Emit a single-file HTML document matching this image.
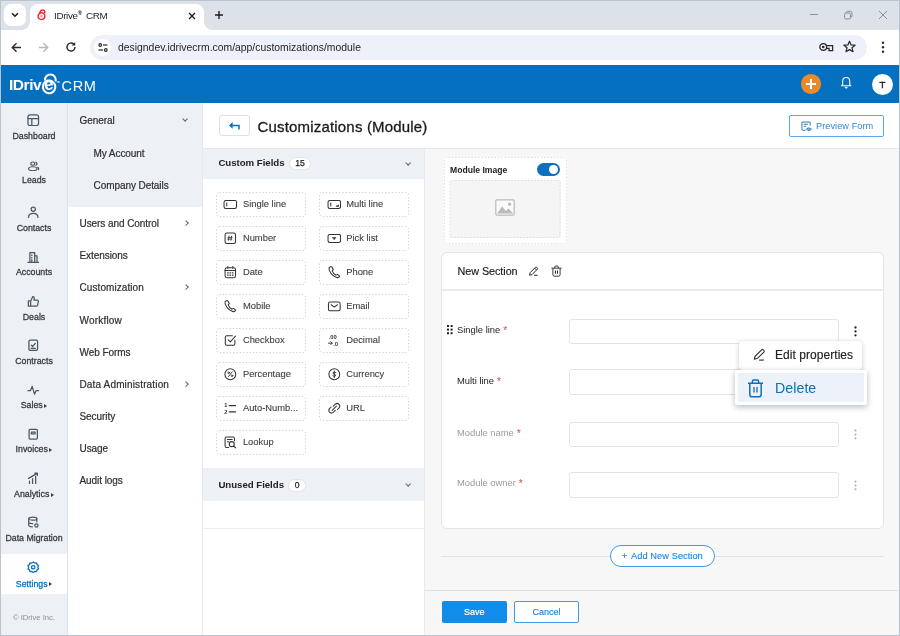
<!DOCTYPE html>
<html lang="en">
<head>
<meta charset="utf-8">
<title>IDrive® CRM</title>
<style>
*{box-sizing:border-box;margin:0;padding:0}
html,body{width:900px;height:636px;overflow:hidden;background:#fff}
body{font-family:"Liberation Sans",sans-serif;color:#333;position:relative;font-size:10px;-webkit-font-smoothing:antialiased;will-change:transform}
.abs{position:absolute}
#frame{position:absolute;left:0;top:0;width:900px;height:636px;border:1px solid #b8c5cf;z-index:100;pointer-events:none}
/* ---------- browser chrome ---------- */
#tabstrip{position:absolute;left:0;top:0;width:900px;height:30px;background:#dde2ea}
#tabsearch{position:absolute;left:4px;top:4px;width:22px;height:22px;border-radius:7px;background:#fff}
#tab{position:absolute;left:30px;top:4px;width:174px;height:26px;background:#fff;border-radius:8px 8px 0 0}
#tab:before,#tab:after{content:"";position:absolute;bottom:0;width:8px;height:8px;background:radial-gradient(circle at 0 0,rgba(255,255,255,0) 7.5px,#fff 8px)}
#tab:before{left:-8px}
#tab:after{right:-8px;background:radial-gradient(circle at 100% 0,rgba(255,255,255,0) 7.5px,#fff 8px)}
#tabtitle{position:absolute;left:24px;top:5.7px;font-size:9.9px;color:#1f1f1f;white-space:nowrap;letter-spacing:-.35px}
#tabtitle sup{font-size:6px;vertical-align:3.5px;letter-spacing:0;font-weight:bold;margin-right:1.5px}
#toolbar{position:absolute;left:1px;top:30px;width:898px;height:35px;background:#fff;border-radius:6px 6px 0 0}
#omni{position:absolute;left:89px;top:4.6px;width:777px;height:25.4px;border-radius:13px;background:#edf1fa}
#omni .site{position:absolute;left:4px;top:4px;width:17px;height:17px;border-radius:50%;background:#fff}
#url{position:absolute;left:28px;top:7.8px;font-size:10.4px;color:#1f1f1f;white-space:nowrap;letter-spacing:0}
/* ---------- app header ---------- */
#hdr{position:absolute;left:1px;top:65px;width:898px;height:38.3px;background:#0570bf}
#logo1{position:absolute;left:8px;top:10.8px;font-size:15.5px;font-weight:bold;color:#fff;letter-spacing:-.45px;white-space:nowrap}
#logoe{position:absolute;left:43.4px;top:11.3px;font-size:17px;font-weight:bold;color:#fff;line-height:18px;transform:rotate(-8deg)}
#logo2{position:absolute;left:60.5px;top:12.6px;font-size:14.5px;color:#fff;white-space:nowrap;letter-spacing:.7px;font-weight:normal}
#plus{position:absolute;left:800.4px;top:9.3px;width:19.6px;height:19.6px;border-radius:50%;background:#e88b2c}
#avatar{position:absolute;left:871px;top:9px;width:21px;height:21px;border-radius:50%;background:#fff;color:#222;font-weight:normal;-webkit-text-stroke:.4px #222;font-size:9.6px;text-align:center;line-height:21.4px}
/* ---------- sidebar 1 ---------- */
#sb1{position:absolute;left:1px;top:103px;width:66px;height:532px;background:#edf1f5}
#sb1line{position:absolute;left:67px;top:103px;width:1px;height:532px;background:#d9e0e7}
.nav{position:absolute;left:0;width:66px;text-align:center;font-size:8.8px;color:#383b3e;white-space:nowrap;letter-spacing:0;-webkit-text-stroke:.28px #383b3e;margin-top:-.2px}
.nav svg{position:absolute;left:26.3px;top:-17.6px;width:12.5px;height:12.5px;stroke:#4a5862;fill:none;stroke-width:1.3;stroke-linecap:round;stroke-linejoin:round}
.nav .car{display:inline-block;width:0;height:0;border-left:3.4px solid #3a3f44;border-top:2.8px solid transparent;border-bottom:2.8px solid transparent;margin-left:1.6px;vertical-align:.2px}
#active{position:absolute;left:0;top:450.6px;width:66px;height:40px;background:#fff}
.nav.on{color:#0b70bf;-webkit-text-stroke-color:#0b70bf}
.nav.on svg{stroke:#0b70bf}
.nav.on .car{border-left-color:#3a3f44}
#copy{position:absolute;left:0;top:510.2px;width:66px;text-align:center;font-size:7.6px;color:#8a9096}
/* ---------- sidebar 2 ---------- */
#sb2{position:absolute;left:68px;top:103px;width:134px;height:532px;background:#fff}
#sb2grp{position:absolute;left:0;top:0;width:134px;height:104px;background:#edf1f5}
#sb2line{position:absolute;left:202px;top:103px;width:1px;height:532px;background:#e4e9ee}
.mi{position:absolute;left:11.5px;font-size:10px;color:#2e2e2e;white-space:nowrap;letter-spacing:-.07px;line-height:12px;margin-top:.7px;-webkit-text-stroke:.2px #2e2e2e}
.mi.sub{left:25.5px}
.chev{position:absolute;width:4.2px;height:4.2px;border-right:1.1px solid #666;border-bottom:1.1px solid #666}
.chev.r{transform:rotate(-45deg)}
.chev.d{transform:rotate(45deg)}

/* ---------- main ---------- */
#main{position:absolute;left:204px;top:103px;width:695px;height:532px;background:#fff}
#phead{position:absolute;left:0;top:0;width:695px;height:44px;background:#fff}
#pline{position:absolute;left:-.5px;top:44.8px;width:695.5px;height:1px;background:#e4e8ed;z-index:3}
#backbtn{position:absolute;left:15px;top:12px;width:31px;height:21px;border:1px solid #dce2e8;border-radius:3px;background:#fff}
#ptitle{position:absolute;left:53.5px;top:14.9px;-webkit-text-stroke:.3px #1a1a1a;font-size:15px;color:#1a1a1a;white-space:nowrap;letter-spacing:.18px;line-height:18px}
#preview{position:absolute;left:585px;top:11.5px;width:95px;height:22px;border:1px solid #58a8ee;border-radius:2px;background:#fff;color:#2f86d6;font-size:9.2px;white-space:nowrap}
#preview span{position:absolute;left:26px;top:5.4px;letter-spacing:.05px}
#lp{position:absolute;left:0;top:45px;width:221px;height:487px;background:#fff}
.band{position:absolute;left:-.6px;width:220.6px;height:31px;background:#edf1f6;font-size:9.7px;color:#222}
.band b{position:absolute;left:15px;top:9.3px;white-space:nowrap;letter-spacing:-.05px}
.badge{position:absolute;top:9px;height:12.5px;border:1px solid #dfe4e9;border-radius:7px;background:#fff;font-size:8.6px;text-align:center;line-height:10.8px;color:#222;font-weight:normal;-webkit-text-stroke:.25px #222}
.chip{position:absolute;width:90px;height:25px;border:1px solid transparent;border-radius:3px;font-size:9.4px;color:#3d3d3d;line-height:22.2px;padding-left:26px;white-space:nowrap;-webkit-text-stroke:.1px #3d3d3d}
.chip svg.bd{left:-1px;top:-1px;width:90px;height:25px;stroke:#d3cdcd;stroke-width:1;stroke-dasharray:1.3 2;stroke-linecap:butt}
.chip svg{position:absolute;left:6.5px;top:5.2px;width:14.6px;height:12.5px;fill:none;stroke:#333;stroke-width:1;stroke-linecap:round;stroke-linejoin:round}
#cv{position:absolute;left:221px;top:45px;width:474px;height:487px;background:#f7f7f7}
#lpline{position:absolute;left:219.6px;top:45px;width:1.4px;height:487px;background:#e7eaef}
#mimg{position:absolute;left:19px;top:9px;width:123px;height:87px;border:1px solid transparent;border-radius:4px;background:#fff}
#mimgin{position:absolute;left:4.5px;top:22px;width:111px;height:58px;border:1px solid transparent;border-radius:2px;background:#f5f5f5}
#tgl{position:absolute;left:92.2px;top:5.3px;width:23px;height:12.5px;border-radius:7px;background:#0b70bf}
#tgl i{position:absolute;left:11.5px;top:1.5px;width:9.5px;height:9.5px;border-radius:50%;background:#fff}
#card{position:absolute;left:16px;top:104px;width:443.4px;height:277px;border:1px solid #e4e5e8;border-radius:6px;background:#fff}
#sect{position:absolute;left:15.5px;top:11.5px;font-size:10.8px;color:#1a1a1a;white-space:nowrap;letter-spacing:-.05px;-webkit-text-stroke:.15px #1a1a1a}
.fl{position:absolute;left:15px;font-size:9.4px;color:#222;white-space:nowrap;margin-top:.4px}
.fl em{font-style:normal;color:#cf4f56;margin-left:.3px;font-size:10.4px;line-height:0;vertical-align:-.8px}
.fl.dis{color:#9b9b9b}
.inp{position:absolute;left:127px;width:269.6px;height:25.6px;border:1px solid #e3e4e5;border-radius:3px;background:#fff}
.keb{width:3px;height:11px}
#pop1{position:absolute;left:314px;top:193px;width:123px;height:29px;background:#fff;border-radius:4px;box-shadow:0 1px 5px rgba(0,0,0,.22);font-size:12px;color:#222}
#pop1 span{position:absolute;left:36px;top:7.4px;white-space:nowrap;letter-spacing:.05px;-webkit-text-stroke:.15px #222}
#pop2{position:absolute;left:310px;top:222px;width:132px;height:35px;background:#fff;border-radius:2px;box-shadow:0 2px 6px rgba(0,0,0,.28);font-size:14.2px;color:#0b70bf}
#pop2 .hl{position:absolute;left:3px;top:3px;width:126px;height:28.6px;background:#edf1f9}
#pop2 span{position:absolute;left:40px;top:9.6px;white-space:nowrap;letter-spacing:.05px}
#addsec{position:absolute;left:185px;top:397px;width:104.5px;height:22px;border:1px solid #3b9aea;border-radius:11px;background:#fff;color:#1f86dc;font-size:9.3px;text-align:center;line-height:21.6px;white-space:nowrap;word-spacing:.2px;-webkit-text-stroke:.12px #1f86dc}
#save{position:absolute;left:17px;top:453px;width:64.5px;height:22px;border-radius:2px;background:#0f8de8;color:#fff;font-size:9px;text-align:center;line-height:22.6px;-webkit-text-stroke:.2px #fff}
#cancel{position:absolute;left:89px;top:453px;width:65px;height:22px;border-radius:2px;border:1px solid #3b9aea;background:#fff;color:#1f86dc;font-size:9px;text-align:center;line-height:20.6px;-webkit-text-stroke:.15px #1f86dc}
</style>
</head>
<body>
<!-- browser chrome -->
<div id="tabstrip">
  <div id="tabsearch"><svg class="abs" style="left:7px;top:8px" width="8" height="6" viewBox="0 0 8 6"><path d="M1 1.2 L4 4.2 L7 1.2" fill="none" stroke="#1f1f1f" stroke-width="1.6"/></svg></div>
  <div id="tab">
    <svg class="abs" style="left:7.4px;top:5.2px;transform:rotate(8deg)" width="9.6" height="11.4" viewBox="0 0 11 13"><g fill="none" stroke="#e8262a" stroke-width="1.7"><path d="M3 5.5 C2.6 2.4 4.3 1 6 1 C7.8 1 8.8 2.3 8.6 4.4"/><ellipse cx="5.4" cy="8.2" rx="3.9" ry="3.9" transform="rotate(12 5.4 8.2)"/></g><rect x="4.3" y="6.8" width="2.2" height="2.8" fill="#f08a8c"/></svg>
    <div id="tabtitle">IDrive<sup>®</sup> CRM</div>
    <svg class="abs" style="left:158px;top:8px" width="8" height="8" viewBox="0 0 8 8"><path d="M1 1 L7 7 M7 1 L1 7" stroke="#1f1f1f" stroke-width="1.4"/></svg>
  </div>
  <svg class="abs" style="left:214px;top:10px" width="10" height="10" viewBox="0 0 10 10"><path d="M5 1 V9 M1 5 H9" stroke="#1f1f1f" stroke-width="1.4"/></svg>
  <!-- window controls -->
  <svg class="abs" style="left:809px;top:10px" width="10" height="10" viewBox="0 0 10 10"><path d="M1 4.5 H9" stroke="#8a9098" stroke-width="1"/></svg>
  <svg class="abs" style="left:843px;top:10px" width="10" height="10" viewBox="0 0 10 10"><g fill="none" stroke="#8a9098" stroke-width="1"><rect x="1.5" y="3" width="6" height="6" rx="1.5"/><path d="M3.2 3 V2.5 Q3.2 1.3 4.4 1.3 H7.5 Q9 1.3 9 2.8 V6 Q9 7 8 7.2"/></g></svg>
  <svg class="abs" style="left:878px;top:10px" width="10" height="10" viewBox="0 0 10 10"><path d="M1 1 L9 9 M9 1 L1 9" stroke="#8a9098" stroke-width="1"/></svg>
</div>
<div id="toolbar">
  <svg class="abs" style="left:10px;top:12px" width="11" height="11" viewBox="0 0 11 11"><path d="M10 5.5 H1.6 M5.5 1.3 L1.3 5.5 L5.5 9.7" fill="none" stroke="#2a2a2a" stroke-width="1.4"/></svg>
  <svg class="abs" style="left:37px;top:12px" width="11" height="11" viewBox="0 0 11 11"><path d="M1 5.5 H9.4 M5.5 1.3 L9.7 5.5 L5.5 9.7" fill="none" stroke="#b4b7bb" stroke-width="1.4"/></svg>
  <svg class="abs" style="left:64px;top:11px" width="12" height="12" viewBox="0 0 12 12"><path d="M10 6 A4 4 0 1 1 8.7 3.1" fill="none" stroke="#2a2a2a" stroke-width="1.4"/><path d="M10.2 1 V4.6 H6.6 Z" fill="#2a2a2a"/></svg>
  <div id="omni">
    <div class="site"><svg class="abs" style="left:3.5px;top:4px" width="10" height="9" viewBox="0 0 10 9"><g fill="none" stroke="#2a2a2a" stroke-width="1.2"><circle cx="2.2" cy="2" r="1.3"/><path d="M5 2 H9.5"/><circle cx="7.8" cy="7" r="1.3"/><path d="M.5 7 H5"/></g></svg></div>
    <div id="url">designdev.idrivecrm.com/app/customizations/module</div>
    <svg class="abs" style="left:729px;top:7px" width="15" height="11" viewBox="0 0 15 11"><g fill="none" stroke="#2a2a2a" stroke-width="1.3"><circle cx="4.2" cy="5" r="3.4"/><path d="M7.6 3.6 H13.6 V8.6 H10 V6.4 H7.6"/></g><circle cx="4.2" cy="5" r="1.3" fill="#2a2a2a"/></svg>
    <svg class="abs" style="left:753px;top:5px" width="13" height="13" viewBox="0 0 13 13"><path d="M6.5 1.2 L8.1 4.9 L12.1 5.2 L9 7.8 L10 11.7 L6.5 9.6 L3 11.7 L4 7.8 L.9 5.2 L4.9 4.9 Z" fill="none" stroke="#2a2a2a" stroke-width="1.25" stroke-linejoin="round"/></svg>
  </div>
  <svg class="abs" style="left:880px;top:11px" width="4" height="13" viewBox="0 0 4 13"><g fill="#2a2a2a"><circle cx="2" cy="1.8" r="1.2"/><circle cx="2" cy="6.3" r="1.2"/><circle cx="2" cy="10.8" r="1.2"/></g></svg>
</div>

<!-- app header -->
<div id="hdr">
  <div id="logo1">IDriv</div>
  <svg class="abs" style="left:38px;top:7px" width="20" height="24" viewBox="0 0 20 24"><g fill="none" stroke="#fff"><path d="M6 8.4 C5.8 4.4 8.6 2.5 11.4 2.5 C14.8 2.5 17 5.2 16.8 9.4" stroke-width="2.1"/><ellipse cx="10.1" cy="14.9" rx="6.2" ry="6.4" stroke-width="2.1" transform="rotate(-12 10.1 14.9)"/></g></svg>
  <div id="logoe">e</div>
  <div class="abs" style="left:56px;top:15.6px;border-radius:50%;width:2.8px;height:2.8px;background:#fff;opacity:.6"></div>
  <div id="logo2">CRM</div>
  <div id="plus"><svg class="abs" style="left:3.8px;top:3.8px" width="12" height="12" viewBox="0 0 12 12"><path d="M6 1 V11 M1 6 H11" stroke="#fff" stroke-width="2"/></svg></div>
  <svg class="abs" style="left:839.4px;top:11.4px" width="12.4" height="13.4" viewBox="0 0 14 15"><g fill="none" stroke="#fff" stroke-width="1.2" stroke-linejoin="round"><path d="M3 9.6 V6 C3 3.4 4.8 1.6 7 1.6 C9.2 1.6 11 3.4 11 6 V9.6 L12.3 11 H1.7 Z"/><path d="M5.6 12.3 L7 13.7 L8.4 12.3"/></g></svg>
  <div id="avatar">T</div>
</div>

<!-- sidebar 1 -->
<div id="sb1">
  <div id="active"></div>
  <div class="nav" style="top:28.3px">Dashboard<svg viewBox="0 0 13 13"><rect x="1" y="1" width="11" height="11" rx="2"/><path d="M1 4.8 H12 M5 4.8 V12"/></svg></div>
  <div class="nav" style="top:72.2px">Leads<svg style="top:-14.4px;height:10.8px" preserveAspectRatio="none" viewBox="0 0 13 13"><circle cx="6" cy="3.2" r="2"/><path d="M9.2 1.4 A2 2 0 0 1 9.2 5"/><ellipse cx="6" cy="9.4" rx="4.4" ry="2.4"/><path d="M11.2 7.6 Q12.6 8.6 12 10.4"/></svg></div>
  <div class="nav" style="top:120.3px">Contacts<svg viewBox="0 0 13 13"><circle cx="6.5" cy="3.4" r="2.2"/><path d="M1.6 12 C1.6 9 3.8 7.6 6.5 7.6 C9.2 7.6 11.4 9 11.4 12"/></svg></div>
  <div class="nav" style="top:164.3px">Accounts<svg style="top:-16.4px" viewBox="0 0 13 13"><path d="M3 11.6 V1.6 H8 V11.6 M8 5 H10.4 V11.6 M1 11.8 H12 M5 4 V4.6 M5 6.6 V7.2 M5 9 V11.6"/></svg></div>
  <div class="nav" style="top:209.3px">Deals<svg viewBox="0 0 13 13"><path d="M1.4 6 H3.8 V11.6 H1.4 Z M3.8 6.4 L6 1.6 C7.2 1.6 7.8 2.4 7.6 3.4 L7.2 5.4 H10.6 C11.4 5.4 12 6.2 11.8 7 L11 10.6 C10.8 11.2 10.4 11.6 9.8 11.6 H3.8"/></svg></div>
  <div class="nav" style="top:253.3px">Contracts<svg viewBox="0 0 13 13"><rect x="2" y="1.2" width="9" height="10.6" rx="1.4"/><path d="M4.4 6.4 L5.8 7.8 L8.6 4.6 M4.4 9.8 H8.6"/></svg></div>
  <div class="nav" style="top:297.3px">Sales<span class="car"></span><svg style="top:-16.6px" viewBox="0 0 13 13"><path d="M1 7 H3.6 L5.4 2.4 L7.8 10.6 L9.4 7 H12"/></svg></div>
  <div class="nav" style="top:341.3px">Invoices<span class="car"></span><svg style="top:-16.2px" viewBox="0 0 13 13"><rect x="2.2" y="1.4" width="8.6" height="10.2" rx="1.2"/><path d="M4.6 4.2 H8.4 V6.2 H4.6 Z"/></svg></div>
  <div class="nav" style="top:386.3px">Analytics<span class="car"></span><svg viewBox="0 0 13 13"><path d="M2.6 12 V9.4 M5.8 12 V7 M9 12 V4.6 M1.6 6.6 L10.6 1.4 M8.2 1.2 H10.8 V3.6"/></svg></div>
  <div class="nav" style="top:430.4px">Data Migration<svg viewBox="0 0 13 13"><ellipse cx="6" cy="2.8" rx="4.2" ry="1.6"/><path d="M1.8 2.8 V9.6 C1.8 10.6 3.6 11.2 5.6 11.2 M10.2 2.8 V6 M1.8 6.2 C1.8 7.2 3.6 7.8 6 7.8"/><circle cx="9.8" cy="9.8" r="1.7"/></svg></div>
  <div class="nav on" style="top:475.7px">Settings<span class="car"></span><svg viewBox="0 0 13 13"><circle cx="6.5" cy="6.5" r="1.8"/><path d="M6.5 1 L8 2.2 L9.9 1.9 L10.4 3.8 L12 4.8 L11.3 6.5 L12 8.2 L10.4 9.2 L9.9 11.1 L8 10.8 L6.5 12 L5 10.8 L3.1 11.1 L2.6 9.2 L1 8.2 L1.7 6.5 L1 4.8 L2.6 3.8 L3.1 1.9 L5 2.2 Z"/></svg></div>
  <div id="copy">© IDrive Inc.</div>
</div>
<div id="sb1line"></div>

<!-- sidebar 2 -->
<div id="sb2">
  <div id="sb2grp"></div>
  <div class="mi" style="top:11.5px">General</div><div class="chev d" style="left:115px;top:14.4px"></div>
  <div class="mi sub" style="top:44px">My Account</div>
  <div class="mi sub" style="top:76px">Company Details</div>
  <div class="mi" style="top:114px">Users and Control</div><div class="chev r" style="left:115.6px;top:117.5px"></div>
  <div class="mi" style="top:146.5px">Extensions</div>
  <div class="mi" style="top:178.5px;letter-spacing:.08px">Customization</div><div class="chev r" style="left:115.6px;top:182px"></div>
  <div class="mi" style="top:211px;letter-spacing:.2px">Workflow</div>
  <div class="mi" style="top:243px">Web Forms</div>
  <div class="mi" style="top:275px;letter-spacing:.15px">Data Administration</div><div class="chev r" style="left:115.6px;top:278.5px"></div>
  <div class="mi" style="top:307.5px">Security</div>
  <div class="mi" style="top:339.5px">Usage</div>
  <div class="mi" style="top:371.5px">Audit logs</div>
</div>
<div id="sb2line"></div>

<!-- main -->
<div id="main">
  <div id="phead">
    <div id="backbtn"><svg class="abs" style="left:8.2px;top:5px" width="12" height="10" viewBox="0 0 12 10"><path d="M11 8.6 V4.4 H2" fill="none" stroke="#0b70bf" stroke-width="1.5"/><path d="M4.6 1 L1 4.4 L4.6 7.8 Z" fill="#0b70bf"/></svg></div>
    <div id="ptitle">Customizations (Module)</div>
    <div id="preview"><svg class="abs" style="left:10.5px;top:5px" width="11" height="11" viewBox="0 0 12 12"><g fill="none" stroke="#2f7fc4" stroke-width="1.1" stroke-linejoin="round"><path d="M10 5 V2.2 Q10 1 8.8 1 H2.2 Q1 1 1 2.2 V8.8 Q1 10 2.2 10 H5"/><path d="M3 3.6 H7.6 M3 5.8 H5.4"/><path d="M6 9 Q8.4 6.2 11.4 9 Q8.4 11.8 6 9 Z"/></g><circle cx="8.7" cy="9" r=".9" fill="#2f7fc4"/></svg><span>Preview Form</span></div>
  </div>
  <div id="pline"></div>

  <!-- left panel -->
  <div id="lp">
    <div class="band" style="top:0"><b>Custom Fields</b><span class="badge" style="left:85.4px;width:22.6px">15</span><div class="chev d" style="left:202.2px;top:12.9px;width:4.3px;height:4.3px"></div></div>
    <div class="chip" style="left:11.9px;top:44px"><svg class="bd" viewBox="0 0 90 25"><rect x=".5" y=".5" width="89" height="24" rx="3"/></svg><svg viewBox="0 0 14 12"><rect x="1" y="2.4" width="12" height="7.6" rx="1.6"/><path d="M3.6 4.8 V7.6"/></svg>Single line</div>
    <div class="chip" style="left:115.2px;top:44px"><svg class="bd" viewBox="0 0 90 25"><rect x=".5" y=".5" width="89" height="24" rx="3"/></svg><svg viewBox="0 0 14 12"><rect x="1" y="2.4" width="12" height="7.6" rx="1.6"/><path d="M3.6 4.8 V7.6 M9 7.8 H11 V6.8"/></svg>Multi line</div>
    <div class="chip" style="left:11.9px;top:78px"><svg class="bd" viewBox="0 0 90 25"><rect x=".5" y=".5" width="89" height="24" rx="3"/></svg><svg viewBox="0 0 14 12"><rect x="2" y="1" width="10" height="10" rx="1.6"/><path d="M5.8 4 L5.2 8 M8.2 4 L7.6 8 M4.8 5.2 H8.8 M4.4 6.8 H8.4" stroke-width=".8"/></svg>Number</div>
    <div class="chip" style="left:115.2px;top:78px"><svg class="bd" viewBox="0 0 90 25"><rect x=".5" y=".5" width="89" height="24" rx="3"/></svg><svg viewBox="0 0 14 12"><rect x="1" y="2.4" width="12" height="7.6" rx="1.6"/><path d="M5.4 5.2 H8.6 L7 7.2 Z" fill="#333" stroke-width=".6"/></svg>Pick list</div>
    <div class="chip" style="left:11.9px;top:112px"><svg class="bd" viewBox="0 0 90 25"><rect x=".5" y=".5" width="89" height="24" rx="3"/></svg><svg viewBox="0 0 14 12"><rect x="2" y="1.6" width="10" height="9.6" rx="1.8"/><path d="M2 4.4 H12 M4.6 .6 V2.2 M9.4 .6 V2.2"/><path d="M4.4 6.6 H5 M6.7 6.6 H7.3 M9 6.6 H9.6 M4.4 8.8 H5 M6.7 8.8 H7.3 M9 8.8 H9.6" stroke-width="1.1"/></svg>Date</div>
    <div class="chip" style="left:115.2px;top:112px"><svg class="bd" viewBox="0 0 90 25"><rect x=".5" y=".5" width="89" height="24" rx="3"/></svg><svg viewBox="0 0 14 12"><path d="M3.2 .8 C2.2 1.2 1.6 2 2 3.4 C3 6.6 5.6 9.6 9.2 11 C10.6 11.4 11.6 10.8 12.2 9.8 L10 8 L8.6 8.8 C7 8 5.6 6.4 5 4.6 L6 3.4 L4.6 .8 Z"/></svg>Phone</div>
    <div class="chip" style="left:11.9px;top:146px"><svg class="bd" viewBox="0 0 90 25"><rect x=".5" y=".5" width="89" height="24" rx="3"/></svg><svg viewBox="0 0 14 12"><path d="M3.2 .8 C2.2 1.2 1.6 2 2 3.4 C3 6.6 5.6 9.6 9.2 11 C10.6 11.4 11.6 10.8 12.2 9.8 L10 8 L8.6 8.8 C7 8 5.6 6.4 5 4.6 L6 3.4 L4.6 .8 Z"/></svg>Mobile</div>
    <div class="chip" style="left:115.2px;top:146px"><svg class="bd" viewBox="0 0 90 25"><rect x=".5" y=".5" width="89" height="24" rx="3"/></svg><svg viewBox="0 0 14 12"><rect x="1.4" y="2" width="11.2" height="8.4" rx="1.6"/><path d="M4 4.6 L7 6.8 L10 4.6"/></svg>Email</div>
    <div class="chip" style="left:11.9px;top:180px"><svg class="bd" viewBox="0 0 90 25"><rect x=".5" y=".5" width="89" height="24" rx="3"/></svg><svg viewBox="0 0 14 12"><path d="M11.4 6 V9.4 Q11.4 10.8 10 10.8 H3.6 Q2.2 10.8 2.2 9.4 V3 Q2.2 1.6 3.6 1.6 H9"/><path d="M5 5.6 L7 7.6 L12 2"/></svg>Checkbox</div>
    <div class="chip" style="left:115.2px;top:180px"><svg class="bd" viewBox="0 0 90 25"><rect x=".5" y=".5" width="89" height="24" rx="3"/></svg><svg viewBox="0 0 14 12"><text x="1.6" y="5.2" font-size="5.6" font-weight="bold" font-family="Liberation Sans,sans-serif" fill="#333" stroke="none">.00</text><text x="6" y="11.2" font-size="5.6" font-weight="bold" font-family="Liberation Sans,sans-serif" fill="#333" stroke="none">.0</text><path d="M1.4 8.8 H5 M3.6 7.4 L5 8.8 L3.6 10.2" stroke-width=".9"/></svg>Decimal</div>
    <div class="chip" style="left:11.9px;top:214px"><svg class="bd" viewBox="0 0 90 25"><rect x=".5" y=".5" width="89" height="24" rx="3"/></svg><svg viewBox="0 0 14 12"><circle cx="7" cy="6" r="5.2"/><path d="M8.8 3.8 L5.2 8.2" stroke-width=".9"/><circle cx="5.4" cy="4.6" r=".8" stroke-width=".8"/><circle cx="8.6" cy="7.4" r=".8" stroke-width=".8"/></svg>Percentage</div>
    <div class="chip" style="left:115.2px;top:214px"><svg class="bd" viewBox="0 0 90 25"><rect x=".5" y=".5" width="89" height="24" rx="3"/></svg><svg viewBox="0 0 14 12"><circle cx="7" cy="6" r="5.2"/><path d="M8.4 4.4 Q7 3.4 5.8 4.4 Q5.2 5.6 7 6 Q8.8 6.4 8.2 7.6 Q7 8.6 5.6 7.6 M7 2.8 V9.2" stroke-width=".9"/></svg>Currency</div>
    <div class="chip" style="left:11.9px;top:248px"><svg class="bd" viewBox="0 0 90 25"><rect x=".5" y=".5" width="89" height="24" rx="3"/></svg><svg viewBox="0 0 14 12"><text x="1.2" y="5.2" font-size="5.4" font-weight="bold" font-family="Liberation Sans,sans-serif" fill="#333" stroke="none">1</text><text x="1.2" y="11.4" font-size="5.4" font-weight="bold" font-family="Liberation Sans,sans-serif" fill="#333" stroke="none">2</text><path d="M6 3.4 H12 M6 9.4 H12" stroke-width="1.2"/></svg>Auto-Numb...</div>
    <div class="chip" style="left:115.2px;top:248px"><svg class="bd" viewBox="0 0 90 25"><rect x=".5" y=".5" width="89" height="24" rx="3"/></svg><svg viewBox="0 0 14 12"><path d="M6 4 L8 2 Q10 .6 11.6 2.2 Q13 3.8 11.6 5.6 L10 7.2 M8 8 L6 10 Q4 11.4 2.4 9.8 Q1 8.2 2.4 6.4 L4 4.8 M5 8 L9 4"/></svg>URL</div>
    <div class="chip" style="left:11.9px;top:282px"><svg class="bd" viewBox="0 0 90 25"><rect x=".5" y=".5" width="89" height="24" rx="3"/></svg><svg viewBox="0 0 14 12"><path d="M5.4 11 H3.4 Q2 11 2 9.6 V2.4 Q2 1 3.4 1 H9.6 Q11 1 11 2.4 V4.6 M4.2 3.4 H8.8 M4.2 5.6 H5.6"/><circle cx="8.4" cy="7.8" r="2.4"/><path d="M10.2 9.6 L12.2 11.4"/></svg>Lookup</div>
    <div class="band" style="top:320px;height:33px"><b style="top:11.1px">Unused Fields</b><span class="badge" style="left:84.5px;width:18.5px;top:11.2px">0</span><div class="chev d" style="left:202.8px;top:14.4px;width:4.3px;height:4.3px"></div></div>
    <div class="abs" style="left:0;top:379.8px;width:220px;height:1px;background:#eceff2"></div>
  </div>

  <div id="lpline"></div>
  <!-- canvas -->
  <div id="cv">
    <div id="mimg"><svg class="abs" style="left:-1px;top:-1px;z-index:2" width="123" height="87" viewBox="0 0 123 87"><rect x=".5" y=".5" width="122" height="86" rx="4" fill="none" stroke="#dcdcdc" stroke-dasharray="1.3 2"/><rect x="6" y="23.5" width="110" height="57" rx="2" fill="none" stroke="#d9d9d9" stroke-dasharray="1.3 2"/></svg>
      <div class="abs" style="left:5px;top:7.2px;font-weight:bold;font-size:8.6px;color:#222;white-space:nowrap">Module Image</div>
      <div id="tgl"><i></i></div>
      <div id="mimgin"><svg class="abs" style="left:44.2px;top:18px" width="20" height="17" viewBox="0 0 20 17"><rect x=".8" y=".8" width="18.4" height="15.4" rx="1.2" fill="#fafafa" stroke="#b9b9b9" stroke-width="1.2"/><path d="M2 14.6 L7.2 7.6 L10.8 12 L13.6 9.4 L18.2 14.6 Z" fill="#b9b9b9"/><circle cx="14.6" cy="5.2" r="1.6" fill="#b9b9b9"/></svg></div>
    </div>
    <div id="card">
      <div id="sect">New Section</div>
      <svg class="abs" style="left:86px;top:13px" width="11" height="11" viewBox="0 0 11 11"><g fill="none" stroke="#222" stroke-width=".95"><path d="M1.6 9.2 L2.2 6.6 L7.6 1.2 Q8.2 .8 8.8 1.4 L9.4 2 Q9.8 2.6 9.4 3.2 L4 8.6 Z"/><path d="M6.8 2.2 L8.6 4 M6 9.3 H9.6"/></g></svg>
      <svg class="abs" style="left:109px;top:12.4px" width="11" height="12" viewBox="0 0 11 12"><g fill="none" stroke="#222" stroke-width=".9"><path d="M.4 3.2 H10.6 M3.7 3 V2 Q3.7 1.1 4.6 1.1 H6.4 Q7.3 1.1 7.3 2 V3 M1.9 3.4 V9.6 Q1.9 11.2 3.5 11.2 H7.5 Q9.1 11.2 9.1 9.6 V3.4"/><path d="M4.5 5.5 V8.7 M6.5 5.5 V8.7" stroke-width="1"/></g></svg>
      <div class="abs" style="left:0;top:36.3px;width:442px;height:1.4px;background:#eaebed"></div>

      <svg class="abs" style="left:5px;top:72px" width="6" height="10" viewBox="0 0 6 10"><g fill="#222"><rect x="0" y="0" width="2" height="2"/><rect x="3.6" y="0" width="2" height="2"/><rect x="0" y="3.6" width="2" height="2"/><rect x="3.6" y="3.6" width="2" height="2"/><rect x="0" y="7.2" width="2" height="2"/><rect x="3.6" y="7.2" width="2" height="2"/></g></svg>
      <div class="fl" style="top:71px">Single line <em>*</em></div><div class="inp" style="top:65.8px"></div>
      <svg class="abs keb" style="left:412.2px;top:73.4px" viewBox="0 0 3 11"><g fill="#222"><circle cx="1.5" cy="1.5" r="1.15"/><circle cx="1.5" cy="5.4" r="1.15"/><circle cx="1.5" cy="9.3" r="1.15"/></g></svg>
      <div class="fl" style="top:122px">Multi line <em>*</em></div><div class="inp" style="top:116.3px"></div>
      <div class="fl dis" style="top:174px">Module name <em>*</em></div><div class="inp" style="top:168.8px"></div>
      <svg class="abs keb" style="left:412.2px;top:176.4px" viewBox="0 0 3 11"><g fill="#aaa"><circle cx="1.5" cy="1.5" r="1"/><circle cx="1.5" cy="5.4" r="1"/><circle cx="1.5" cy="9.3" r="1"/></g></svg>
      <div class="fl dis" style="top:224px">Module owner <em>*</em></div><div class="inp" style="top:219.2px"></div>
      <svg class="abs keb" style="left:412.2px;top:226.8px" viewBox="0 0 3 11"><g fill="#aaa"><circle cx="1.5" cy="1.5" r="1"/><circle cx="1.5" cy="5.4" r="1"/><circle cx="1.5" cy="9.3" r="1"/></g></svg>
    </div>
    <!-- popups -->
    <div id="pop1"><svg class="abs" style="left:12.6px;top:7.4px" width="14.4" height="14.4" viewBox="0 0 15 15"><g fill="none" stroke="#222" stroke-width="1.1"><path d="M2.4 11.6 L3.2 8.6 L10.2 1.8 Q11 1.2 11.8 2 L12.4 2.6 Q13 3.4 12.4 4.2 L5.4 11 Z"/><path d="M7.4 12.6 H12.4"/></g></svg><span>Edit properties</span></div>
    <div id="pop2"><div class="hl"></div><svg class="abs" style="left:11.6px;top:9px" width="17" height="19" viewBox="0 0 17 19"><g fill="none" stroke="#0b70bf" stroke-width="1.5"><path d="M1 4.2 H16 M5.4 4.2 V2.4 Q5.4 1 6.8 1 H10.2 Q11.6 1 11.6 2.4 V4.2 M2.8 4.2 V15.4 Q2.8 17.8 5.2 17.8 H11.8 Q14.2 17.8 14.2 15.4 V4.2"/><path d="M7 8 V13.6 M10 8 V13.6" stroke-width="1.3"/></g></svg><span>Delete</span></div>

    <div class="abs" style="left:16px;top:408px;width:443px;height:1px;background:#e2e2e2"></div>
    <div id="addsec"><span style="margin-right:1.6px">+</span> Add New Section</div>
    <div class="abs" style="left:0;top:441.5px;width:474px;height:1px;background:#e0e0e0"></div>
    <div id="save">Save</div>
    <div id="cancel">Cancel</div>
  </div>
</div>


<div id="frame"></div>
</body>
</html>
